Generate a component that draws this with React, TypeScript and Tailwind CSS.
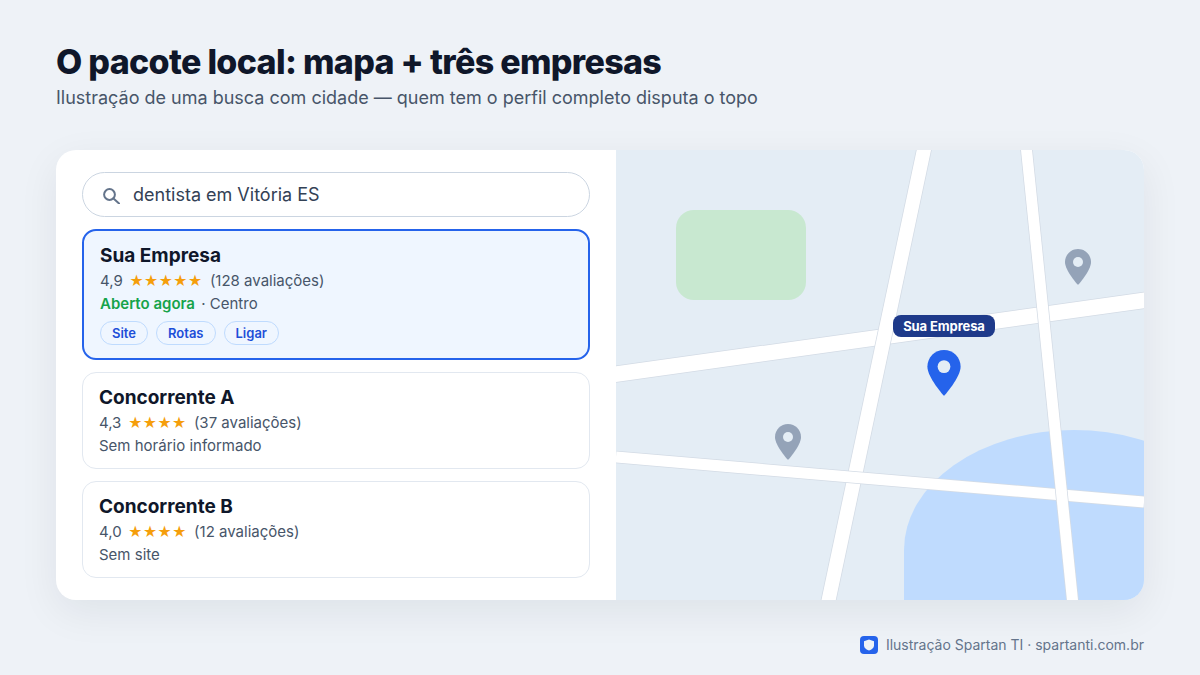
import React from "react";

const Pin = ({ color, inner, className }: { color: string; inner: string; className: string }) => (
  <svg viewBox="0 0 26 36" className={className}>
    <path d="M13 0C5.8 0 0 5.8 0 13c0 8.8 13 23 13 23s13-14.2 13-23C26 5.8 20.2 0 13 0z" fill={color} />
    <circle cx="13" cy="13" r="5" fill={inner} />
  </svg>
);

const Road = ({ d, w }: { d: string; w: number }) => (
  <>
    <path d={d} stroke="#d3dbe5" strokeWidth={w + 1.5} fill="none" />
    <path d={d} stroke="#ffffff" strokeWidth={w} fill="none" />
  </>
);

const Stars = ({ n }: { n: number }) => (
  <span className="text-[#f59e0b] text-[14px] leading-none ml-[6.5px] mr-[7.5px]">{"★".repeat(n)}</span>
);

const Chip = ({ children }: { children: React.ReactNode }) => (
  <span className="h-[24px] px-[11px] pt-[1px] flex items-center rounded-full border border-[#bfdbfe] text-[13px] font-semibold text-[#1d4ed8]">
    {children}
  </span>
);

const Competitor = ({ name, rating, stars, reviews, note }: { name: string; rating: string; stars: number; reviews: string; note: string }) => (
  <div className="h-[97px] rounded-[14px] border border-[#e2e8f0] bg-white px-4 pt-[12px]">
    <div className="text-[19px] leading-[26px] font-bold text-[#0f172a]">{name}</div>
    <div className="flex items-center text-[15px] leading-[22px] mt-[1px] text-[#475569]">
      <span>{rating}</span>
      <Stars n={stars} />
      <span>{reviews}</span>
    </div>
    <div className="text-[15px] leading-[22px] mt-[1px] text-[#475569]">{note}</div>
  </div>
);

export default function App() {
  return (
    <div className="w-[1200px] h-[675px] bg-[#eef2f7] px-14 pt-[42px] flex flex-col overflow-hidden font-['Inter',sans-serif]">
      <h1 className="text-[34px] leading-[40px] font-extrabold tracking-[-0.68px] text-[#0f172a]">O pacote local: mapa + três empresas</h1>
      <p className="text-[18px] leading-[24px] mt-[4px] text-[#475569]">Ilustração de uma busca com cidade — quem tem o perfil completo disputa o topo</p>

      <div className="mt-[40px] h-[450px] flex rounded-[20px] overflow-hidden bg-white shadow-[0_12px_40px_rgba(15,23,42,0.07)]">
        <div className="w-[560px] shrink-0 px-[26px] pt-[22px] flex flex-col gap-3">
          <div className="h-[45px] rounded-full border border-[#cbd5e1] flex items-center pl-[20px] gap-[12px]">
            <svg viewBox="0 0 18 18" className="w-[18px] h-[18px]" fill="none" stroke="#64748b" strokeWidth="2">
              <circle cx="6.5" cy="8.5" r="5.4" />
              <path d="M10.5 12.5L16 17.5" strokeLinecap="round" />
            </svg>
            <span className="text-[18px] text-[#334155]">dentista em Vitória ES</span>
          </div>
          <div className="h-[131px] rounded-[14px] border-2 border-[#2563eb] bg-[#eff6ff] px-4 pt-[12px]">
            <div className="text-[19px] leading-[26px] font-bold text-[#0f172a]">Sua Empresa</div>
            <div className="flex items-center text-[15px] leading-[22px] mt-[1px] text-[#475569]">
              <span>4,9</span>
              <Stars n={5} />
              <span>(128 avaliações)</span>
            </div>
            <div className="text-[15px] leading-[22px] mt-[1px] text-[#475569]">
              <span className="font-semibold text-[#16a34a] mr-[2px]">Aberto agora</span> · Centro
            </div>
            <div className="flex gap-2 mt-[6px]">
              <Chip>Site</Chip>
              <Chip>Rotas</Chip>
              <Chip>Ligar</Chip>
            </div>
          </div>
          <Competitor name="Concorrente A" rating="4,3" stars={4} reviews="(37 avaliações)" note="Sem horário informado" />
          <Competitor name="Concorrente B" rating="4,0" stars={4} reviews="(12 avaliações)" note="Sem site" />
        </div>

        <div className="relative flex-1 bg-[#e4edf5]">
          <svg viewBox="0 0 528 450" className="absolute inset-0 w-full h-full">
            <rect x="60" y="60" width="130" height="90" rx="18" fill="#c8e8d0" />
            <rect x="288" y="280" width="340" height="300" rx="170" ry="120" fill="#bfdbfe" />
            <Road w={15.5} d="M-10 225.5L538 149" />
            <Road w={14} d="M310 -10L210.5 460" />
            <Road w={11} d="M0 307L528 352" />
            <Road w={11} d="M409.5 -10L457.5 460" />
          </svg>
          <Pin color="#94a3b8" inner="#e4edf5" className="absolute left-[449px] top-[99px] w-[26px] h-[36px]" />
          <Pin color="#94a3b8" inner="#e4edf5" className="absolute left-[159px] top-[274px] w-[26px] h-[36px]" />
          <Pin color="#2563eb" inner="#e4edf5" className="absolute left-[311px] top-[200px] w-[34px] h-[46px]" />
          <div className="absolute left-[277px] top-[165px] w-[102px] h-[22px] pt-[2px] rounded-[8px] bg-[#1e3a8a] text-white text-[13px] font-bold tracking-[-0.1px] flex items-center justify-center">Sua Empresa</div>
        </div>
      </div>

      <div className="mt-[34px] flex items-center justify-end gap-[8px] text-[14px] text-[#64748b]">
        <svg viewBox="0 0 18 18" className="w-[18px] h-[18px]">
          <rect width="18" height="18" rx="4" fill="#2563eb" />
          <path d="M9 3.5l5 1.7v4c0 2.8-2.2 4.4-5 5.3-2.8-.9-5-2.5-5-5.3v-4z" fill="#eef2f7" />
        </svg>
        <span>Ilustração Spartan TI · spartanti.com.br</span>
      </div>
    </div>
  );
}
